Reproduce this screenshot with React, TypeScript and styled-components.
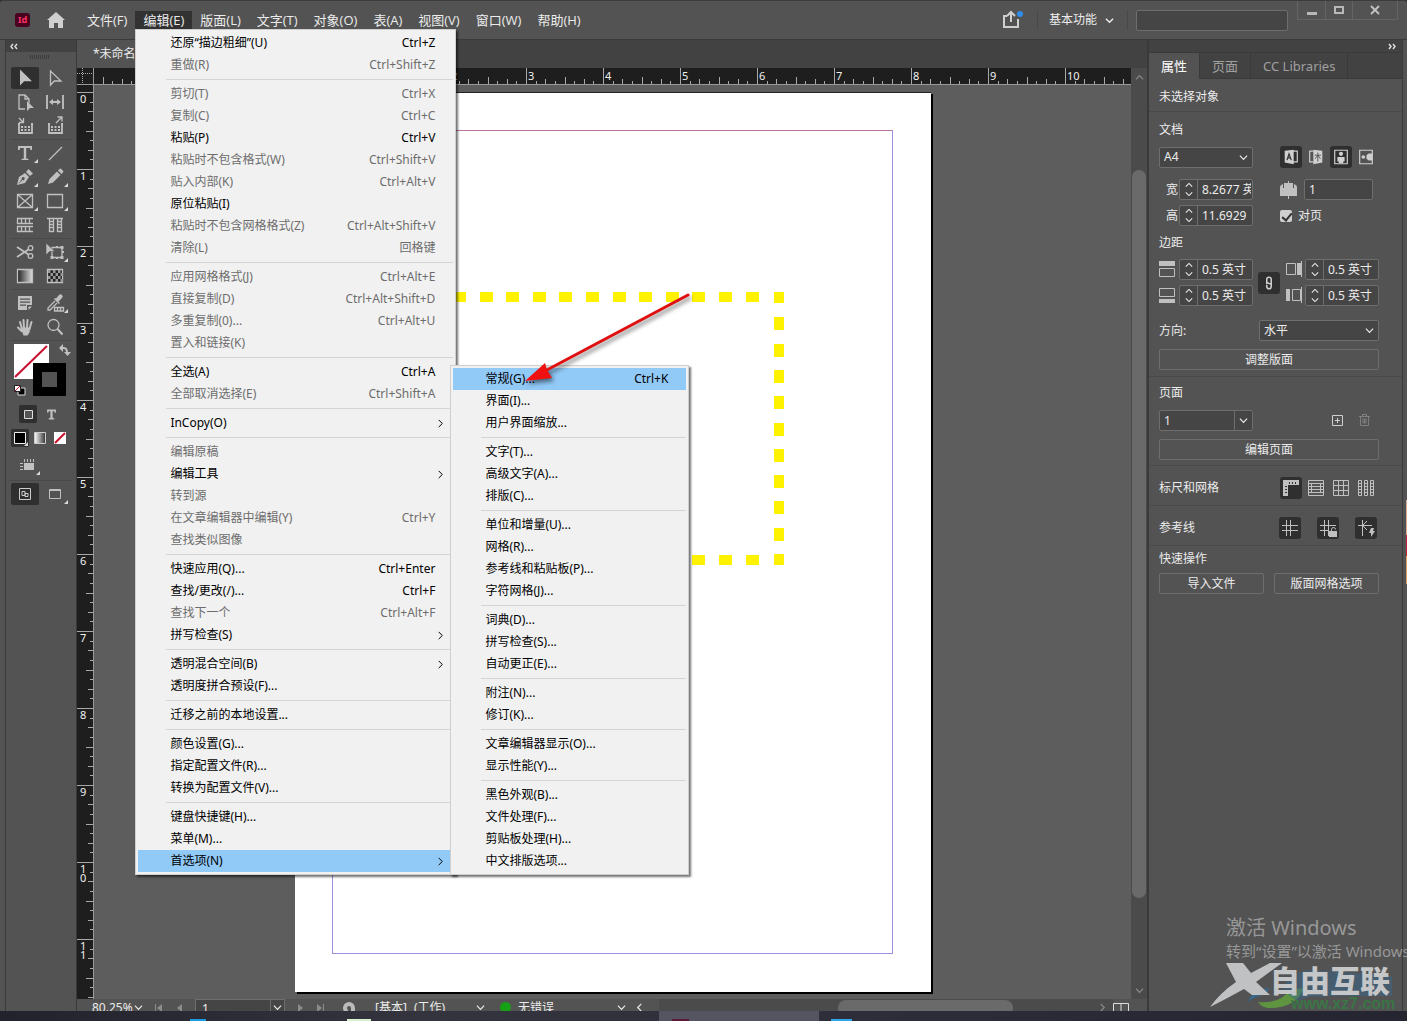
import React from "react";
import styled, { createGlobalStyle, css } from "styled-components";

const INCH = 77;
const c = {
  bar: "#535353",
  strip: "#424242",
  line: "#3a3a3a",
  field: "#454545",
  edge: "#6e6e6e",
  text: "#ececec",
  icon: "#c0c0c0",
  pressed: "#2f2f2f",
};

const GlobalStyle = createGlobalStyle`
  * { box-sizing: border-box; }
  html, body { margin: 0; height: 100%; overflow: hidden; background: #2b2b36; }
  body, button, input, select {
    font-family: "Noto Sans", "Noto Sans CJK SC", sans-serif;
    font-size: 12px;
    line-height: 16px;
  }
  button, select, input { margin: 0; color: inherit; }
  button { padding: 0; border: 0; background: none; }
  svg { display: block; flex: none; }
`;

/* ---------- window frame ---------- */

const Screen = styled.div`
  position: relative;
  display: flex;
  flex-direction: column;
  height: 100vh;
  overflow: hidden;
  color: ${c.text};
`;
const AppWindow = styled.div`
  flex: 1;
  min-height: 0;
  display: flex;
  flex-direction: column;
  background: ${c.bar};
  border-top: 1px solid #3c3c3c;
  border-radius: 3px 3px 0 0;
`;
const TitleBar = styled.header`
  flex: none;
  display: flex;
  height: 39px;
  padding-left: 15px;
  border-bottom: 1px solid ${c.line};
`;
const Brand = styled.div`
  display: flex;
  align-items: center;
  gap: 17px;
  width: 64px;
`;
const MenuBar = styled.nav`
  display: flex;
  align-items: center;
`;
const MenuSlot = styled.div`
  position: relative;
`;
const MenuButton = styled.button<{ $open?: boolean }>`
  height: 18px;
  padding: 0 8px;
  font-family: "Open Sans", "Noto Sans CJK SC", sans-serif;
  font-size: 13px;
  line-height: 18px;
  white-space: nowrap;
  background: ${(p) => (p.$open ? "#323232" : "transparent")};
`;
const TitleTools = styled.div`
  display: flex;
  align-items: center;
  margin-left: auto;
  padding-right: 9px;
`;
const Divider = styled.span`
  width: 1px;
  height: 20px;
  background: #484848;
`;
const ShareButton = styled.button`
  margin-right: 14px;
`;
const Workspace = styled.button`
  display: flex;
  align-items: center;
  gap: 8px;
  padding: 0 13px 0 11px;
`;
const Search = styled.input`
  width: 152px;
  height: 21px;
  margin: 0 9px 0 8px;
  padding: 0 6px;
  border: 1px solid ${c.edge};
  border-radius: 2px;
  background: ${c.field};
`;
const WindowButtons = styled.div`
  display: flex;
  align-self: flex-start;
  height: 19px;
  border: 1px solid #646464;
  border-top: 0;
`;
const WindowButton = styled.button<{ $wide?: boolean }>`
  display: grid;
  place-items: center;
  width: ${(p) => (p.$wide ? 45 : 27)}px;
  & + & { border-left: 1px solid #646464; }
`;

/* ---------- drop-down menus ---------- */

const menuBox = css`
  position: absolute;
  padding: 2px;
  border: 1px solid #cfcfcf;
  background: #f1f1f1;
  color: #000;
  box-shadow: 2px 2px 2px rgba(0, 0, 0, 0.55);
`;
const Dropdown = styled.div`
  ${menuBox}
  z-index: 10;
  top: 18px;
  left: 0;
  width: 321px;
`;
const Submenu = styled.div`
  ${menuBox}
  bottom: -3px;
  left: 312px;
  width: 239px;
`;
const ItemSlot = styled.div`
  position: relative;
`;
const MenuItem = styled.button<{ $active?: boolean }>`
  display: flex;
  align-items: center;
  width: 100%;
  height: 22px;
  padding: 0 18px 0 32px;
  text-align: left;
  white-space: nowrap;
  background: ${(p) => (p.$active ? "#91c9f7" : "transparent")};
  &:disabled { color: #6d6d6d; }
  > span:last-child { margin-left: auto; }
  > svg { margin: 0 -10px 0 auto; }
`;
const MenuRule = styled.hr`
  height: 1px;
  margin: 3px 0 3px 28px;
  border: 0;
  background: #d4d4d4;
`;

/* ---------- workspace ---------- */

const Body = styled.div`
  flex: 1;
  min-height: 0;
  display: flex;
  padding: 0 4px 0 5px;
`;
const Toolbox = styled.aside`
  flex: none;
  width: 72px;
  border-left: 1px solid ${c.line};
  border-right: 1px solid ${c.line};
`;
const PanelHead = styled.div<{ $right?: boolean }>`
  display: flex;
  align-items: center;
  justify-content: ${(p) => (p.$right ? "flex-end" : "flex-start")};
  height: 12px;
  padding: 0 6px 0 4px;
  background: ${c.strip};
`;
const Grip = styled.div`
  width: 20px;
  height: 4px;
  margin: 3px auto 6px 24px;
  background: repeating-linear-gradient(90deg, #3c3c3c 0 1px, transparent 1px 2px);
`;
const ToolGroup = styled.div`
  display: grid;
  grid-template-columns: 30px 30px;
  margin: 0 4px;
  padding: 1px 0;
  border-bottom: 1px solid #494949;
  &:last-child { border-bottom: 0; }
`;
const Tool = styled.button<{ $on?: boolean }>`
  position: relative;
  display: grid;
  place-items: center;
  width: 28px;
  height: 22px;
  margin: 1px;
  border-radius: 2px;
  color: ${c.icon};
  background: ${(p) => (p.$on ? c.pressed : "transparent")};
`;
const Flyout = styled.i`
  position: absolute;
  right: 1px;
  bottom: 1px;
  border: 2px solid transparent;
  border-right-color: #d8d8d8;
  border-bottom-color: #d8d8d8;
`;
const Swatches = styled.div`
  padding: 2px 0 9px 7px;
`;
const MiniRow = styled.div<{ $indent?: boolean }>`
  display: flex;
  gap: ${(p) => (p.$indent ? 5 : 2)}px;
  height: 24px;
  padding-left: ${(p) => (p.$indent ? 13 : 5)}px;
`;
const Mini = styled.button<{ $on?: boolean }>`
  position: relative;
  display: grid;
  place-items: center;
  width: 18px;
  height: 18px;
  border-radius: 2px;
  color: ${c.icon};
  background: ${(p) => (p.$on ? c.pressed : "transparent")};
`;
const PreviewRow = styled.div`
  height: 24px;
  padding-left: 6px;
`;

const DocArea = styled.main`
  flex: 1;
  min-width: 0;
  display: flex;
  flex-direction: column;
`;
const TabStrip = styled.div`
  flex: none;
  display: flex;
  height: 28px;
  background: ${c.strip};
`;
const DocTab = styled.button`
  padding: 0 16px;
  border-right: 1px solid ${c.line};
  background: ${c.bar};
`;
const Stage = styled.div`
  flex: 1;
  min-height: 0;
  display: grid;
  grid-template: 17px 1fr / 17px 1fr 16px;
`;
const RulerH = styled.div`
  min-width: 0;
  overflow: hidden;
  background: #1e1e1e;
  border-bottom: 1px solid #9a9a9a;
`;
const RulerV = styled.div`
  min-height: 0;
  overflow: hidden;
  background: #1e1e1e;
  border-right: 1px solid #9a9a9a;
`;
const RulerCorner = styled.div`
  background: #1e1e1e;
  border-right: 1px solid #9a9a9a;
  border-bottom: 1px solid #9a9a9a;
`;
const Canvas = styled.div`
  position: relative;
  overflow: hidden;
  background: #5d5d5d;
`;
const Page = styled.div`
  position: absolute;
  top: 7px;
  left: 201px;
  width: 636px;
  height: 900px;
  background: #fff;
  border-top: 1px solid #222;
  box-shadow: 2px 2px 0 #000;
`;
const MarginFrame = styled.div`
  position: absolute;
  inset: 37px 38px 38px 37px;
  border: 1px solid #9c8fe0;
  border-top-color: #b8769e;
`;
const Dashes = styled.svg`
  position: absolute;
  top: 199px;
  left: 158px;
`;
const ScrollV = styled.div`
  grid-row: span 2;
  display: flex;
  flex-direction: column;
  align-items: center;
  justify-content: space-between;
  padding: 5px 0 4px;
  color: #8c8c8c;
  background: #4b4b4b;
`;
const ScrollThumb = styled.div`
  flex: none;
  width: 14px;
  height: 79%;
  border-radius: 7px;
  background: #6a6a6a;
`;
const StatusBar = styled.footer`
  flex: none;
  display: flex;
  align-items: flex-start;
  height: 12px;
  overflow: hidden;
  padding-left: 15px;
  background: ${c.bar};
`;
const StatusCell = styled.div<{ $w: number }>`
  flex: none;
  display: flex;
  align-items: center;
  gap: 7px;
  width: ${(p) => p.$w}px;
  height: 17px;
  white-space: nowrap;
`;
const PageCombo = styled.label`
  flex: none;
  display: flex;
  align-items: center;
  width: 90px;
  height: 20px;
  margin-right: 12px;
  border: 1px solid ${c.edge};
  background: ${c.field};
  input {
    width: 75px;
    height: 18px;
    padding: 0 6px 2px;
    border: 0;
    border-right: 1px solid ${c.edge};
    background: none;
  }
  svg { margin: -4px auto 0; }
`;
const ScrollH = styled.div`
  flex: 1;
  display: flex;
  align-items: center;
  justify-content: space-between;
  height: 17px;
  padding-right: 6px;
  color: #8c8c8c;
  background: #4b4b4b;
  > div {
    width: 39%;
    height: 16px;
    margin: 1px 0 0 40%;
    border-radius: 8px;
    background: #6a6a6a;
  }
`;
const Dot = styled.span`
  width: 11px;
  height: 11px;
  border-radius: 50%;
  background: #15a015;
`;

/* ---------- properties panel ---------- */

const Panel = styled.aside`
  flex: none;
  width: 256px;
  border-left: 2px solid ${c.line};
  border-right: 1px solid ${c.line};
`;
const Tabs = styled.div`
  display: flex;
  height: 27px;
  background: ${c.strip};
  border-top: 1px solid ${c.line};
`;
const Tab = styled.button<{ $on?: boolean }>`
  padding: 0 12px;
  font-size: 13px;
  border-right: 1px solid ${c.line};
  border-bottom: 1px solid ${(p) => (p.$on ? c.bar : c.line)};
  color: ${(p) => (p.$on ? "#fff" : "#a0a0a0")};
  background: ${(p) => (p.$on ? c.bar : "transparent")};
`;
const TabFill = styled.div`
  flex: 1;
  border-bottom: 1px solid ${c.line};
`;
const Section = styled.section<{ $tight?: boolean }>`
  display: flex;
  flex-direction: column;
  gap: 8px;
  padding: ${(p) => (p.$tight ? "8px 23px 5px 10px" : "10px 23px 6px 10px")};
  border-bottom: 1px solid #494949;
`;
const QuickSection = styled(Section)`
  gap: 6px;
  padding-top: 5px;
  border-bottom: 0;
`;
const Heading = styled.h2`
  margin: 0;
  font-size: 12px;
  font-weight: 400;
`;
const Split = styled.div`
  display: grid;
  grid-template-columns: 94px 99px;
  column-gap: 27px;
  align-items: center;
`;
const SizeGrid = styled(Split)`
  row-gap: 5px;
  margin: 3px 0 1px;
`;
const MarginGrid = styled.div`
  display: grid;
  grid-template-columns: 94px 22px 94px;
  gap: 5px;
  align-items: center;
  margin-bottom: 6px;
  > button { grid-row: 1 / span 2; grid-column: 2; }
`;
const Row = styled.div<{ $between?: boolean; $gap?: number }>`
  display: flex;
  align-items: center;
  justify-content: ${(p) => (p.$between ? "space-between" : "flex-start")};
  gap: ${(p) => p.$gap ?? 0}px;
`;
const EndRow = styled(Row)`
  justify-content: flex-end;
`;
const ToolRow = styled(Row)`
  height: 23px;
  padding-right: 2px;
`;
const PageTools = styled(Row)`
  padding-right: 4px;
`;
const IconButton = styled.button<{ $on?: boolean }>`
  display: grid;
  place-items: center;
  width: 22px;
  height: 22px;
  border-radius: 3px;
  color: #d0d0d0;
  background: ${(p) => (p.$on ? c.pressed : "transparent")};
  &:disabled { color: #808080; }
`;
const field = css`
  height: 21px;
  border: 1px solid ${c.edge};
  border-radius: 2px;
  background: ${c.field};
`;
const SelectBox = styled.span<{ $w: number }>`
  ${field}
  position: relative;
  display: flex;
  align-items: center;
  width: ${(p) => p.$w}px;
  select {
    flex: 1;
    height: 19px;
    padding: 0 4px;
    border: 0;
    appearance: none;
    background: none;
  }
  svg { position: absolute; right: 4px; pointer-events: none; }
`;
const ComboBox = styled.span`
  ${field}
  display: flex;
  align-items: center;
  width: 94px;
  input {
    width: 75px;
    height: 19px;
    padding: 0 4px;
    border: 0;
    border-right: 1px solid ${c.edge};
    background: none;
  }
  button { display: grid; place-items: center; flex: 1; }
`;
const StepperBox = styled.span`
  ${field}
  display: flex;
  width: 74px;
  overflow: hidden;
  input {
    width: 53px;
    padding: 0 0 0 4px;
    border: 0;
    background: none;
  }
`;
const StepButtons = styled.span`
  display: flex;
  flex-direction: column;
  justify-content: space-around;
  align-items: center;
  width: 18px;
  padding: 1px 0;
  border-right: 1px solid ${c.edge};
`;
const TextField = styled.input`
  ${field}
  width: 69px;
  padding: 0 4px;
`;
const PanelButton = styled.button`
  flex: 1;
  height: 21px;
  min-height: 21px;
  border: 1px solid ${c.edge};
  border-radius: 2px;
  line-height: 18px;
`;
const Check = styled.label`
  display: flex;
  align-items: center;
  gap: 6px;
  input {
    position: relative;
    appearance: none;
    width: 12px;
    height: 12px;
    border-radius: 2px;
    background: #cfcfcf;
  }
  input:checked::after {
    content: "";
    position: absolute;
    left: 4px;
    top: 1px;
    width: 4px;
    height: 8px;
    border: solid #333;
    border-width: 0 2px 2px 0;
    transform: rotate(40deg);
  }
`;

/* ---------- overlays ---------- */

const ArrowMark = styled.svg`
  position: absolute;
  z-index: 20;
  top: 285px;
  left: 515px;
  pointer-events: none;
  filter: drop-shadow(2px 3px 2px rgba(0, 0, 0, 0.5));
`;
const Activate = styled.div`
  position: absolute;
  left: 1226px;
  bottom: 60px;
  width: 181px;
  overflow: hidden;
  white-space: nowrap;
  color: #989898;
  pointer-events: none;
  font-size: 15px;
  line-height: 20px;
  strong { display: block; font-size: 20px; font-weight: 400; line-height: 26px; }
`;
const SiteMark = styled.div`
  position: absolute;
  left: 1208px;
  bottom: 7px;
  width: 199px;
  height: 54px;
  pointer-events: none;
  > svg { position: absolute; top: 0; left: 0; }
  b {
    position: absolute;
    top: 5px;
    left: 62px;
    font-size: 30px;
    font-weight: 900;
    line-height: 32px;
    color: #c4c6c8;
    white-space: nowrap;
  }
  span {
    position: absolute;
    top: 36px;
    left: 83px;
    font: 700 16px/16px "Liberation Sans", sans-serif;
    color: #3a7546;
  }
`;
const EdgeStrip = styled.div`
  position: absolute;
  top: 500px;
  right: 0;
  width: 1px;
  height: 84px;
  background: linear-gradient(#d8a98c 0 35px, #c02038 35px 56px, #d8a060 56px);
`;
const Taskbar = styled.div`
  z-index: 1;
  flex: none;
  display: flex;
  justify-content: center;
  height: 10px;
  background: linear-gradient(90deg, #22222c, #34343f 30%, #2e2e3a 60%, #252532);
`;
const TaskSlots = styled.div`
  display: flex;
  align-items: flex-end;
  flex: 1;
  padding-left: 190px;
`;
const TaskIcon = styled.span<{ $c: string; $w: number; $gap: number }>`
  width: ${(p) => p.$w}px;
  height: 2px;
  margin-right: ${(p) => p.$gap}px;
  background: ${(p) => p.$c};
`;
const TaskActive = styled.span`
  display: flex;
  align-items: flex-end;
  width: 160px;
  height: 10px;
  margin-right: 12px;
  padding-left: 13px;
  background: #555561;
`;

/* ---------- small drawings ---------- */

type Dir = "down" | "up" | "right" | "left";
const turn: Record<Dir, number> = { down: 0, up: 180, right: -90, left: 90 };
const Chevron = ({ dir = "down", size = 9, w = 1.3 }: { dir?: Dir; size?: number; w?: number }) => (
  <svg width={size} height={size} viewBox="0 0 10 10" fill="none" stroke="currentColor" strokeWidth={w}>
    <path d="M1 3l4 4 4-4" transform={`rotate(${turn[dir]} 5 5)`} />
  </svg>
);

const Glyph = ({ children, size = 20, fill }: { children: React.ReactNode; size?: number; fill?: boolean }) => (
  <svg width={size} height={size} viewBox="0 0 20 20" fill={fill ? "currentColor" : "none"} stroke={fill ? "none" : "currentColor"} strokeWidth="1.3">
    {children}
  </svg>
);

const Basket = () => (
  <>
    <path d="M4 8v9h13V8M3 8h2M16 8h2" strokeWidth="1.800" />
    <path d="M6 11h9M6 14h9" strokeWidth="2" strokeDasharray="2 1.500" />
  </>
);

const icons: Record<string, React.ReactNode> = {
  select: <Glyph fill><path d="M5 1.5v16l4.2-4.3H17z" /></Glyph>,
  direct: <Glyph><path d="M5.5 3v14l3.800-4H16z" /></Glyph>,
  page: <Glyph><path d="M10 17H4V3h6l4 4v4M10 3v4h4" /><path d="M12 9v10l3-3h4z" fill="currentColor" stroke="none" /></Glyph>,
  gap: <Glyph><path d="M2 3v14M18 3v14M5 10h10" strokeWidth="1.800" /><path d="M4 10l4-3v6zM16 10l-4-3v6z" fill="currentColor" stroke="none" /></Glyph>,
  collect: <Glyph><Basket /><path d="M4 2l4 4M8.500 2v4.500H4" /></Glyph>,
  place: <Glyph><Basket /><path d="M11 7l6-6M12.500 1H17v4.500" /></Glyph>,
  type: <Glyph fill><path d="M3 3h14v4h-1.600L15 5h-3.800v10.500l2.300.5v1h-7v-1l2.300-.5V5H5l-.4 2H3z" /></Glyph>,
  line: <Glyph><path d="M4 17L17 4" /></Glyph>,
  pen: <Glyph fill><path fillRule="evenodd" d="M2 18l2-8 6-4 4 4-4 6zM3 17.500l4.500-4.600a1.500 1.500 0 1 0-.7-.7zM11 5l2.500-3L18 6.500 15 9z" /></Glyph>,
  pencil: <Glyph fill><path d="M3 17l1.500-5L12 4.500 15.500 8 8 15.500zM13 3.500l1.500-1.500a1.200 1.200 0 0 1 1.700 0l1.800 1.800a1.200 1.200 0 0 1 0 1.700L16.500 7z" /></Glyph>,
  frame: <Glyph><path d="M2.500 3.500h15v13h-15zM2.500 3.500l15 13M17.500 3.500l-15 13" /></Glyph>,
  rect: <Glyph><path d="M2.500 3.500h15v13h-15z" /></Glyph>,
  gridH: <Glyph><path d="M2 3.500h16M2 8.500h16M2 11.500h16M2 16.500h16M2.500 3v6M6.500 3.500v5M10.500 3.500v5M14.500 3.500v5M2.500 11v6M6.500 11.500v5M10.500 11.500v5M14.500 11.500v5" /></Glyph>,
  gridV: <Glyph><path d="M2 3.500h16M4.500 3v14M8.500 3v14M12.500 3v14M16.500 3v14M4.500 6.500h4M4.500 9.500h4M4.500 12.500h4M4.500 16.500h4M12.500 6.500h4M12.500 9.500h4M12.500 12.500h4M12.500 16.500h4" /></Glyph>,
  scissors: <Glyph><path d="M2 5l11.500 7.500M2 15L13.500 7.500" strokeWidth="1.800" /><circle cx="15.500" cy="6" r="2.300" /><circle cx="15.500" cy="14" r="2.300" /></Glyph>,
  transform: <Glyph><path d="M7 5.500h10v10H7z" /><path d="M15.500 4h3v3h-3zM15.500 14h3v3h-3zM5.500 14h3v3h-3zM11 4h2v2h-2zM11 15h2v2h-2zM17 9h2v2h-2z" fill="currentColor" stroke="none" /><path d="M1 1v12l3.500-3.500H10z" fill="currentColor" stroke={c.bar} strokeWidth=".6" /></Glyph>,
  gradient: <Glyph><defs><linearGradient id="gs"><stop stopColor="#222" /><stop offset="1" stopColor="#ddd" /></linearGradient></defs><path d="M2.500 3.500h15v13h-15z" fill="url(#gs)" /></Glyph>,
  feather: (
    <Glyph>
      <path d="M2.500 3.500h15v13h-15z" fill="#222" />
      {[0, 1, 2, 3].flatMap((r) => [0, 1, 2].map((k) => (
        <rect key={`${r}-${k}`} x={3 + k * 5 + (r % 2) * 2.5} y={4 + r * 3} width="2.500" height="3" fill="#999" stroke="none" />
      )))}
    </Glyph>
  ),
  note: <Glyph fill><path fillRule="evenodd" d="M3 3h14v9h-5v5H3zM5 5.500h10v1.200H5zM5 8.500h10v1.200H5zM5 11.500h6v1.200H5zM13.500 13.500H17L13.500 17z" /></Glyph>,
  dropper: <Glyph><path d="M10 8l-7 7v2h2l7-7" /><path d="M9 6l5 5 1-1-1.500-1.500L17 5a2 2 0 0 0-3-3l-3 3.500L10 5z" fill="currentColor" stroke="none" /><path d="M9.500 14.500h9v3.500h-9zM12.500 14.500V18M15.500 14.500V18" /></Glyph>,
  hand: <Glyph><path d="M7 12L5 5M9 11L8.500 3M12 11l.5-8M14.500 12L16.500 5M6.500 14L3 10.500" strokeWidth="2" strokeLinecap="round" /><path d="M5.500 10.500h10l-1 5-2 3h-4z" fill="currentColor" stroke="none" /></Glyph>,
  zoom: <Glyph><circle cx="8.500" cy="8" r="5.500" /><path d="M12.500 12l5 5.500" strokeWidth="2" /></Glyph>,
};

const ToolButton = ({ name, label, on, more }: { name: string; label: string; on?: boolean; more?: boolean }) => (
  <Tool $on={on} aria-label={label}>
    {icons[name]}
    {more && <Flyout />}
  </Tool>
);

const toolGroups: [string, string, boolean?][][] = [
  [["select", "选择"], ["direct", "直接选择"], ["page", "页面"], ["gap", "间隙"], ["collect", "内容收集器"], ["place", "内容置入器"]],
  [["type", "文字", true], ["line", "直线"], ["pen", "钢笔", true], ["pencil", "铅笔", true], ["frame", "矩形框架", true], ["rect", "矩形", true], ["gridH", "水平网格"], ["gridV", "垂直网格"]],
  [["scissors", "剪刀"], ["transform", "自由变换", true], ["gradient", "渐变色板"], ["feather", "渐变羽化"]],
  [["note", "附注"], ["dropper", "颜色主题", true], ["hand", "抓手"], ["zoom", "缩放"]],
];

/* ---------- menu data ---------- */

type Entry = [label: string, key?: string, off?: boolean] | null;
const MORE = ">";
const editMenu: Entry[] = [
  ["还原“描边粗细”(U)", "Ctrl+Z"], ["重做(R)", "Ctrl+Shift+Z", true], null,
  ["剪切(T)", "Ctrl+X", true], ["复制(C)", "Ctrl+C", true], ["粘贴(P)", "Ctrl+V"],
  ["粘贴时不包含格式(W)", "Ctrl+Shift+V", true], ["贴入内部(K)", "Ctrl+Alt+V", true], ["原位粘贴(I)"],
  ["粘贴时不包含网格格式(Z)", "Ctrl+Alt+Shift+V", true], ["清除(L)", "回格键", true], null,
  ["应用网格格式(J)", "Ctrl+Alt+E", true], ["直接复制(D)", "Ctrl+Alt+Shift+D", true],
  ["多重复制(0)...", "Ctrl+Alt+U", true], ["置入和链接(K)", undefined, true], null,
  ["全选(A)", "Ctrl+A"], ["全部取消选择(E)", "Ctrl+Shift+A", true], null,
  ["InCopy(O)", MORE], null,
  ["编辑原稿", undefined, true], ["编辑工具", MORE], ["转到源", undefined, true],
  ["在文章编辑器中编辑(Y)", "Ctrl+Y", true], ["查找类似图像", undefined, true], null,
  ["快速应用(Q)...", "Ctrl+Enter"], ["查找/更改(/)...", "Ctrl+F"], ["查找下一个", "Ctrl+Alt+F", true], ["拼写检查(S)", MORE], null,
  ["透明混合空间(B)", MORE], ["透明度拼合预设(F)..."], null,
  ["迁移之前的本地设置..."], null,
  ["颜色设置(G)..."], ["指定配置文件(R)..."], ["转换为配置文件(V)..."], null,
  ["键盘快捷键(H)..."], ["菜单(M)..."],
];
const prefsMenu: Entry[] = [
  ["常规(G)...", "Ctrl+K"], ["界面(I)..."], ["用户界面缩放..."], null,
  ["文字(T)..."], ["高级文字(A)..."], ["排版(C)..."], null,
  ["单位和增量(U)..."], ["网格(R)..."], ["参考线和粘贴板(P)..."], ["字符网格(J)..."], null,
  ["词典(D)..."], ["拼写检查(S)..."], ["自动更正(E)..."], null,
  ["附注(N)..."], ["修订(K)..."], null,
  ["文章编辑器显示(O)..."], ["显示性能(Y)..."], null,
  ["黑色外观(B)..."], ["文件处理(F)..."], ["剪贴板处理(H)..."], ["中文排版选项..."],
];

const Entries = ({ list, active }: { list: Entry[]; active?: number }) => (
  <>
    {list.map((e, i) =>
      e ? (
        <MenuItem key={i} role="menuitem" disabled={e[2]} $active={i === active}>
          {e[0]}
          {e[1] === MORE ? <Chevron dir="right" w={1.1} /> : e[1] && <span>{e[1]}</span>}
        </MenuItem>
      ) : (
        <MenuRule key={i} />
      ),
    )}
  </>
);

const EditMenu = () => (
  <Dropdown role="menu">
    <Entries list={editMenu} />
    <ItemSlot>
      <MenuItem role="menuitem" $active>
        首选项(N)
        <Chevron dir="right" w={1.1} />
      </MenuItem>
      <Submenu role="menu">
        <Entries list={prefsMenu} active={0} />
      </Submenu>
    </ItemSlot>
  </Dropdown>
);

/* ---------- rulers ---------- */

const tickLength = (i: number) => (i % 8 === 0 ? 16 : i % 4 === 0 ? 7 : i % 2 === 0 ? 5 : 3);
const ticks = (origin: number, from: number, to: number) =>
  Array.from({ length: (to - from) * 8 }, (_, k) => {
    const i = from * 8 + k;
    return { i, at: Math.round(origin + (i * INCH) / 8) };
  });
const range = (from: number, to: number) => Array.from({ length: to - from + 1 }, (_, k) => from + k);

const HorizontalRuler = () => (
  <svg width="2600" height="16" fill="#f0f0f0" fontSize="11">
    {ticks(201, -3, 31).map(({ i, at }) => (
      <rect key={i} x={at} y={16 - tickLength(i)} width="1" height={tickLength(i)} fill="#a8a8a8" />
    ))}
    {range(-2, 10).map((n) => (
      <text key={n} x={203 + n * INCH} y="12">{Math.abs(n)}</text>
    ))}
  </svg>
);
const VerticalRuler = () => (
  <svg width="16" height="1600" fill="#f0f0f0" fontSize="11">
    {ticks(7, 0, 20).map(({ i, at }) => (
      <rect key={i} x={16 - tickLength(i)} y={at} width={tickLength(i)} height="1" fill="#a8a8a8" />
    ))}
    {range(0, 11).flatMap((n) =>
      String(n).split("").map((d, k) => (
        <text key={`${n}-${k}`} x="3" y={18 + n * INCH + k * 9}>{d}</text>
      )),
    )}
  </svg>
);

/* ---------- panel pieces ---------- */

const Stepper = ({ id, label, value }: { id: string; label?: string; value: string }) => (
  <StepperBox>
    <StepButtons>
      <button aria-label="增加"><Chevron dir="up" size={8} /></button>
      <button aria-label="减少"><Chevron size={8} /></button>
    </StepButtons>
    <input id={id} aria-label={label} defaultValue={value} />
  </StepperBox>
);

const MarginIcon = ({ side }: { side: "top" | "bottom" | "left" | "right" }) => (
  <svg width="17" height="17" fill="none" stroke={c.icon}>
    {side === "top" && <><path d="M0 0h16v5H0z" fill={c.icon} stroke="none" /><path d="M.5 7.500h15v8H.5z" /></>}
    {side === "bottom" && <><path d="M0 12h16v4H0z" fill={c.icon} stroke="none" /><path d="M.5 1.500h15v8H.5z" /></>}
    {side === "left" && <><path d="M1.500 2.500h9v11h-9zM16.500 0v16" /><path d="M12 2h4v12h-4z" fill={c.icon} stroke="none" /></>}
    {side === "right" && <><path d="M7.500 2.500h8v11h-8zM16.500 0v16" /><path d="M1 2h4v12H1z" fill={c.icon} stroke="none" /></>}
  </svg>
);

const PropertiesPanel = () => (
  <Panel>
    <PanelHead $right>
      <svg width="8" height="7" fill="none" stroke="#ddd" strokeWidth="1.500"><path d="M1 1l2 2.500L1 6M5 1l2 2.500L5 6" /></svg>
    </PanelHead>
    <Tabs>
      <Tab $on>属性</Tab>
      <Tab>页面</Tab>
      <Tab>CC Libraries</Tab>
      <TabFill />
    </Tabs>
    <Section>
      <Heading>未选择对象</Heading>
    </Section>
    <Section>
      <Heading>文档</Heading>
      <Split>
        <SelectBox $w={94}>
          <select aria-label="页面大小"><option>A4</option></select>
          <Chevron />
        </SelectBox>
        <Row $gap={3}>
          <IconButton $on aria-label="从左到右">
            <Glyph size={18}><path d="M12 3.500h5v12h-5" /><path d="M3 3l10-1v16L3 16z" fill="currentColor" stroke="none" /><path d="M5.500 13.500l2.300-7 2.500 7M6.500 11h3" stroke={c.pressed} /></Glyph>
          </IconButton>
          <IconButton aria-label="从右到左">
            <Glyph size={18}><path d="M7 3.500H3v12h4" /><path d="M17 3L7 2v16l10-2z" fill="currentColor" stroke="none" /><path d="M12 5v10M8.500 8h7M12 8l-3 4M12 8l3 4" stroke={c.bar} strokeWidth="1" /></Glyph>
          </IconButton>
          <IconButton $on aria-label="纵向">
            <Glyph size={18}><path d="M3 2.500h14v15H3z" /><circle cx="10" cy="6.500" r="2.300" fill="currentColor" stroke="none" /><path d="M6 10h8v5h-1.500v2h-5v-2H6z" fill="currentColor" stroke="none" /></Glyph>
          </IconButton>
          <IconButton aria-label="横向">
            <Glyph size={18}><path d="M17 2.500H3v15h14z" /><circle cx="7" cy="10" r="2" fill="currentColor" stroke="none" /><path d="M10.500 8L13 6h4v8h-4l-2.500-2z" fill="currentColor" stroke="none" /></Glyph>
          </IconButton>
        </Row>
      </Split>
      <SizeGrid>
        <EndRow $gap={1}>
          <label htmlFor="w">宽</label>
          <Stepper id="w" value="8.2677 英寸" />
        </EndRow>
        <Row $gap={6}>
          <svg width="18" height="18" fill={c.icon}><path d="M0 6q0-2 3-3v4h1V2h4v13H0zM17 6q0-2-3-3v4h-1V2H9v13h8zM8 0h1v18H8z" /></svg>
          <TextField aria-label="页数" defaultValue="1" />
        </Row>
        <EndRow $gap={1}>
          <label htmlFor="h">高</label>
          <Stepper id="h" value="11.6929" />
        </EndRow>
        <Check>
          <input type="checkbox" defaultChecked />
          对页
        </Check>
      </SizeGrid>
      <Heading>边距</Heading>
      <MarginGrid>
        <Row $between><MarginIcon side="top" /><Stepper id="mt" label="上边距" value="0.5 英寸" /></Row>
        <IconButton $on aria-label="将所有设置设为相同">
          <Glyph size={18}><path d="M7.500 11V6a2.500 2.500 0 0 1 5 0v3M12.500 9v5a2.500 2.500 0 0 1-5 0v-2M7.500 9.500l5 2" strokeWidth="1.700" /></Glyph>
        </IconButton>
        <Row $between><MarginIcon side="left" /><Stepper id="ml" label="左边距" value="0.5 英寸" /></Row>
        <Row $between><MarginIcon side="bottom" /><Stepper id="mb" label="下边距" value="0.5 英寸" /></Row>
        <Row $between><MarginIcon side="right" /><Stepper id="mr" label="右边距" value="0.5 英寸" /></Row>
      </MarginGrid>
      <Row $between>
        <label htmlFor="dir">方向:</label>
        <SelectBox $w={120}>
          <select id="dir"><option>水平</option></select>
          <Chevron />
        </SelectBox>
      </Row>
      <PanelButton>调整版面</PanelButton>
    </Section>
    <Section $tight>
      <Heading>页面</Heading>
      <Row $between>
        <ComboBox>
          <input aria-label="页面" defaultValue="1" />
          <button aria-label="选择页面"><Chevron /></button>
        </ComboBox>
        <PageTools $gap={5}>
          <IconButton aria-label="新建页面">
            <svg width="11" height="11" fill="none" stroke="currentColor"><path d="M.5.5h10v10H.5zM3 5.500h5M5.500 3v5" /></svg>
          </IconButton>
          <IconButton disabled aria-label="删除页面">
            <svg width="11" height="12" fill="none" stroke="currentColor"><path d="M0 2.500h11M3.500 2V.5h4V2M1.500 3v8.500h8V3M4 4.500v5M5.500 4.500v5M7 4.500v5" /></svg>
          </IconButton>
        </PageTools>
      </Row>
      <PanelButton>编辑页面</PanelButton>
    </Section>
    <Section>
      <ToolRow $between>
        <Heading>标尺和网格</Heading>
        <Row $gap={3}>
          <IconButton $on aria-label="标尺"><svg width="18" height="18" fill={c.icon}><path fillRule="evenodd" d="M1 1h16v5H6v11H1zM7 3v2h1V3zM10 3v2h1V3zM13 3v2h1V3zM3 7v1h2V7zM3 10v1h2v-1zM3 13v1h2v-1z" /></svg></IconButton>
          <IconButton aria-label="基线网格"><svg width="18" height="18" fill="none" stroke={c.icon}><path d="M1.500 1.500h15v15h-15zM1.500 4.500h15M1.500 7.500h15M1.500 10.500h15M1.500 13.500h15M4.500 4v10M13.500 4v10" /></svg></IconButton>
          <IconButton aria-label="文档网格"><svg width="18" height="18" fill="none" stroke={c.icon}><path d="M1.500 1.500h15v15h-15zM1.500 6.500h15M1.500 11.500h15M6.500 1v16M11.500 1v16" /></svg></IconButton>
          <IconButton aria-label="版面网格"><svg width="18" height="18" fill="none" stroke={c.icon}><path d="M1.500 1.500h3v15h-3zM7.500 1.500h3v15h-3zM13.500 1.500h3v15h-3zM1 4.500h4M1 7.500h4M1 10.500h4M1 13.500h4M7 4.500h4M7 7.500h4M7 10.500h4M7 13.500h4M13 4.500h4M13 7.500h4M13 10.500h4M13 13.500h4" /></svg></IconButton>
        </Row>
      </ToolRow>
    </Section>
    <Section>
      <ToolRow $between>
        <Heading>参考线</Heading>
        <Row $gap={16}>
          <IconButton $on aria-label="显示参考线"><svg width="18" height="18" fill="none" stroke={c.icon}><path d="M5.500 1v16M9.500 1v16M1 6.500h16M1 11.500h16" /></svg></IconButton>
          <IconButton $on aria-label="锁定参考线"><svg width="18" height="18" fill="none" stroke={c.icon}><path d="M5.500 1v16M9.500 1v16M1 6.500h16M1 11.500h9M12.500 12v-1.500a2 2 0 0 1 4 0" /><path d="M10 12h8v6h-8z" fill={c.icon} stroke="none" /></svg></IconButton>
          <IconButton $on aria-label="智能参考线"><svg width="18" height="18" fill="none" stroke={c.icon}><path d="M5.500 1v16M1 6.500h14M10 2L5.500 6.500 10 11" /><path d="M14 9h3l-1 3h2l-4 6v-4h-2z" fill={c.icon} stroke="none" /></svg></IconButton>
        </Row>
      </ToolRow>
    </Section>
    <QuickSection>
      <Heading>快速操作</Heading>
      <Row $gap={10}>
        <PanelButton>导入文件</PanelButton>
        <PanelButton>版面网格选项</PanelButton>
      </Row>
    </QuickSection>
  </Panel>
);

const ToolPanel = () => (
  <Toolbox>
    <PanelHead>
      <svg width="8" height="7" fill="none" stroke="#ddd" strokeWidth="1.500"><path d="M3 1L1 3.500 3 6M7 1L5 3.500 7 6" /></svg>
    </PanelHead>
    <Grip />
    {toolGroups.map((group, g) => (
      <ToolGroup key={g}>
        {group.map(([name, label, more]) => (
          <ToolButton key={name} name={name} label={label} more={more} on={name === "select"} />
        ))}
      </ToolGroup>
    ))}
    <Swatches>
      <svg width="60" height="53" fill="none">
        <path d="M1 1h35v35H1z" fill="#fff" />
        <path d="M2 34L34 3" stroke="#c8102e" strokeWidth="2" />
        <path d="M20 20h33v33H20z" fill="#000" />
        <path d="M29 29h15v15H29z" fill={c.bar} />
        <path d="M49 5h2q3 0 3 5" stroke={c.icon} strokeWidth="2" />
        <path d="M50 1v8l-4-4zM51 9h7l-3.500 4z" fill={c.icon} />
        <path d="M5 45h7v7H5z" fill="#000" stroke="#ddd" />
        <path d="M1.500 42.500h6v6h-6z" fill="#fff" stroke="#222" />
        <path d="M2 48l5-5" stroke="#c8102e" />
      </svg>
    </Swatches>
    <MiniRow $indent>
      <Mini $on aria-label="格式针对容器"><svg width="9" height="9" fill="#555" stroke="#ddd"><path d="M.5.5h8v8h-8z" /></svg></Mini>
      <Mini aria-label="格式针对文本"><Glyph size={11} fill><path d="M2 1h16v6h-2l-1-3h-3v12l3 1v2H5v-2l3-1V4H5L4 7H2z" /></Glyph></Mini>
    </MiniRow>
    <MiniRow>
      <Mini $on aria-label="应用颜色"><svg width="12" height="12" stroke="#eee"><path d="M.5.5h11v11H.5z" /></svg><Flyout /></Mini>
      <Mini aria-label="应用渐变"><svg width="12" height="12" stroke="#ccc"><defs><linearGradient id="ga"><stop stopColor="#fff" /><stop offset="1" stopColor="#333" /></linearGradient></defs><path d="M.5.5h11v11H.5z" fill="url(#ga)" /></svg></Mini>
      <Mini aria-label="应用无"><svg width="12" height="12"><path d="M0 0h12v12H0z" fill="#fff" /><path d="M1 11L11 1" stroke="#c8102e" strokeWidth="2" /></svg></Mini>
    </MiniRow>
    <PreviewRow>
      <Tool aria-label="视图选项">
        <svg width="16" height="14" fill={c.icon}><path d="M5 5h10v7H5zM1 5h3v1H1zM1 8h3v1H1zM1 11h3v1H1zM5 1h1v3H5zM8 1h1v3H8zM11 1h1v3h-1zM14 1h1v3h-1z" /></svg>
        <Flyout />
      </Tool>
    </PreviewRow>
    <ToolGroup />
    <ToolGroup>
      <Tool $on aria-label="正常"><svg width="12" height="12" fill="none" stroke="#ccc"><path d="M.5.5h11v11H.5zM3 3.500h3v4H3zM6 5.500h3v3H6z" /></svg></Tool>
      <Tool aria-label="屏幕模式"><svg width="12" height="12" fill="none" stroke={c.icon}><path d="M.5 1.500h11v9H.5zM0 2.500h12" /></svg><Flyout /></Tool>
    </ToolGroup>
  </Toolbox>
);

const Artboard = () => (
  <Canvas>
    <Page>
      <MarginFrame />
      <Dashes width="332" height="274" fill="#fff200">
        {range(0, 11).map((k) => {
          const x = Math.round(k * 26.6);
          return <React.Fragment key={k}><rect x={x} y="0" width="13" height="10" /><rect x={x} y="263" width="13" height="10" /></React.Fragment>;
        })}
        {range(0, 10).map((k) => (
          <rect key={k} x="321" y={k === 0 ? 0 : Math.round(k * 26.3) - 1} width="10" height={k === 0 || k === 10 ? 11 : 13} />
        ))}
      </Dashes>
    </Page>
  </Canvas>
);

const Status = () => (
  <StatusBar>
    <StatusCell $w={42}>80.25%</StatusCell>
    <StatusCell $w={20}><Chevron /></StatusCell>
    <StatusCell $w={41}>
      <svg width="30" height="16" fill="#8c8c8c"><path d="M1 4h1v8H1zM8 4L3 8l5 4zM28 4l-5 4 5 4z" /></svg>
    </StatusCell>
    <PageCombo>
      <input aria-label="页码" defaultValue="1" />
      <Chevron />
    </PageCombo>
    <StatusCell $w={78}>
      <svg width="60" height="16" fill="#8c8c8c">
        <path d="M1 4l5 4-5 4zM20 4l5 4-5 4zM26 4h1v8h-1z" />
        <path d="M52 14a6 6 0 1 1 6-6v6h-4V8a2 2 0 0 0-4 0z" fill="#bbb" />
      </svg>
    </StatusCell>
    <StatusCell $w={101}>
      <span>[基本]</span>
      <span>(工作)</span>
    </StatusCell>
    <StatusCell $w={24}><Chevron /></StatusCell>
    <StatusCell $w={117}><Dot />无错误</StatusCell>
    <StatusCell $w={18}><Chevron /></StatusCell>
    <StatusCell $w={24}><Chevron dir="left" /></StatusCell>
    <ScrollH><div /><Chevron dir="right" /></ScrollH>
    <StatusCell $w={34}>
      <svg width="16" height="14" fill="none" stroke="#ddd"><path d="M.5 2.500h15v12H.5zM8 2v14" /></svg>
    </StatusCell>
  </StatusBar>
);

export default function App() {
  const menus = ["文件(F)", "编辑(E)", "版面(L)", "文字(T)", "对象(O)", "表(A)", "视图(V)", "窗口(W)", "帮助(H)"];
  return (
    <Screen>
      <GlobalStyle />
      <AppWindow>
        <TitleBar>
          <Brand>
            <svg width="15" height="14">
              <rect width="15" height="14" rx="3" fill="#49021f" />
              <text x="3" y="10" fontSize="9" fontWeight="700" fill="#ff3366">Id</text>
            </svg>
            <svg width="18" height="16" fill="#cfcfcf"><path d="M9 0l9 8h-2v8h-5v-5H7v5H2V8H0z" /></svg>
          </Brand>
          <MenuBar>
            {menus.map((m) => (
              <MenuSlot key={m}>
                <MenuButton $open={m.startsWith("编辑")}>{m}</MenuButton>
                {m.startsWith("编辑") && <EditMenu />}
              </MenuSlot>
            ))}
          </MenuBar>
          <TitleTools>
            <ShareButton aria-label="共享">
              <svg width="21" height="21" fill="none" stroke="#cfcfcf" strokeWidth="2">
                <path d="M5 6H2v11h14V9M9 12V3M5 6l4-4 4 4" />
                <circle cx="18" cy="4" r="3" fill="#2f8ceb" stroke="none" />
              </svg>
            </ShareButton>
            <Divider />
            <Workspace>基本功能 <Chevron w={1.6} /></Workspace>
            <Divider />
            <Search aria-label="搜索" />
            <WindowButtons>
              <WindowButton aria-label="最小化"><svg width="10" height="10"><path d="M0 7h10v3H0z" fill="#b8b8b8" /></svg></WindowButton>
              <WindowButton aria-label="最大化"><svg width="10" height="8" fill="none" stroke="#b8b8b8" strokeWidth="2"><path d="M1 1h8v6H1z" /></svg></WindowButton>
              <WindowButton $wide aria-label="关闭"><svg width="10" height="10" stroke="#c4c4c4" strokeWidth="1.800"><path d="M1 1l8 8M9 1L1 9" /></svg></WindowButton>
            </WindowButtons>
          </TitleTools>
        </TitleBar>
        <Body>
          <ToolPanel />
          <DocArea>
            <TabStrip><DocTab>*未命名-1</DocTab></TabStrip>
            <Stage>
              <RulerCorner>
                <svg width="16" height="16" stroke="#aaa" strokeDasharray="1 1"><path d="M5.500 0v16M0 5.500h16" /></svg>
              </RulerCorner>
              <RulerH><HorizontalRuler /></RulerH>
              <ScrollV><Chevron dir="up" /><ScrollThumb /><Chevron /></ScrollV>
              <RulerV><VerticalRuler /></RulerV>
              <Artboard />
            </Stage>
            <Status />
          </DocArea>
          <PropertiesPanel />
        </Body>
      </AppWindow>
      <SiteMark>
        <svg width="199" height="54" fill="none">
          <path d="M62 28q-18 2-22 14 6-6 16-7z" fill="#35688f" />
          <path d="M50 42q22 2 32-12l14-2q-8 20-34 20-8 0-12-6z" fill="#5f9440" />
          <path d="M74 30q6-18 30-20l80 6v20h-60q-30 0-34 6z" fill="#3a678c" opacity=".5" />
          <path d="M18 3h17l8 10L62 3h12L48 22l14 13H44l-8-6Q16 40 2 47q10-14 26-25z" fill="#bfc1c3" />
        </svg>
        <b>自由互联</b>
        <span>www.xz7.com</span>
      </SiteMark>
      <Taskbar>
        <TaskSlots>
          <TaskIcon $c="#1b9be0" $w={16} $gap={141} />
          <TaskIcon $c="#d8f0d0" $w={24} $gap={288} />
          <TaskActive><TaskIcon $c="#5a1838" $w={17} $gap={0} /></TaskActive>
          <TaskIcon $c="#2fa6ea" $w={21} $gap={0} />
        </TaskSlots>
      </Taskbar>
      <EdgeStrip />
      <ArrowMark width="190" height="115">
        <path d="M173 10L30 86" stroke="#e01010" strokeWidth="3" strokeLinecap="round" />
        <path d="M10 96L30 78l2 7 5 8z" fill="#f01010" />
      </ArrowMark>
      <Activate>
        <strong>激活 Windows</strong>
        转到“设置”以激活 Windows
      </Activate>
    </Screen>
  );
}
